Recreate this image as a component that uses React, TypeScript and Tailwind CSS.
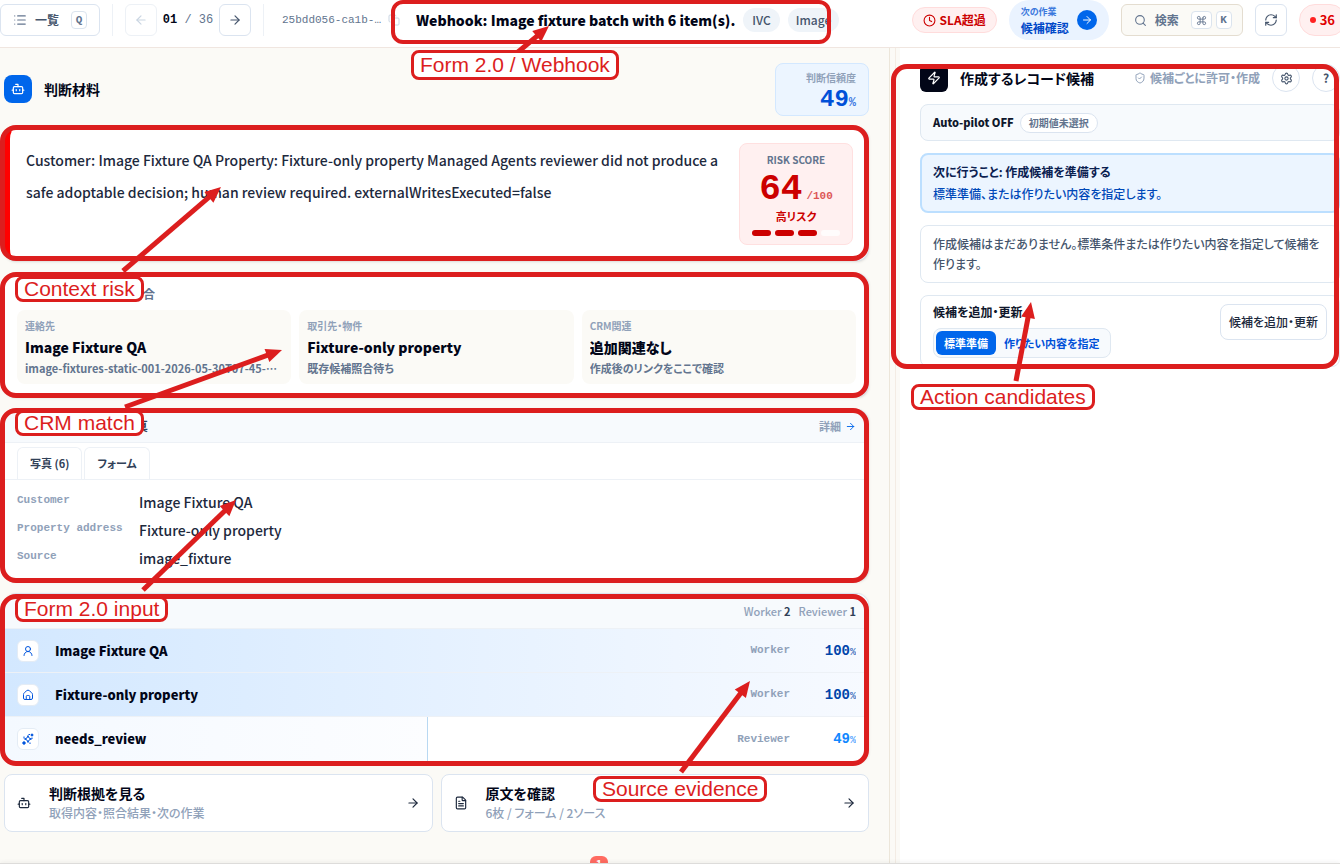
import type { ReactNode } from 'react'
import {
  ArrowLeft,
  ArrowRight,
  Bot,
  Clock,
  Command,
  Copy,
  FileText,
  List,
  RefreshCw,
  Search,
  Settings,
  ShieldCheck,
  UserRound,
  Zap,
} from 'lucide-react'
import { clsx } from 'clsx'

const MONO = "font-['Liberation_Mono',monospace]"

interface ArrowProps {
  from: [number, number]
  to: [number, number]
}

/* Callout arrow, coordinates relative to the annotated block */
function Arrow({ from, to }: ArrowProps) {
  const [x1, y1] = from
  const [x2, y2] = to
  const len = Math.hypot(x2 - x1, y2 - y1)
  const ux = (x2 - x1) / len
  const uy = (y2 - y1) / len
  const bx = x2 - ux * 16
  const by = y2 - uy * 16
  return (
    <svg className="pointer-events-none absolute left-0 top-0 z-10 size-px overflow-visible" aria-hidden="true">
      <line x1={x1} y1={y1} x2={bx + ux * 3} y2={by + uy * 3} stroke="#dc1e1e" strokeWidth={5} />
      <polygon
        points={`${x2},${y2} ${bx - uy * 7},${by + ux * 7} ${bx + uy * 7},${by - ux * 7}`}
        fill="#dc1e1e"
      />
    </svg>
  )
}

function Frame({ className }: { className: string }) {
  return (
    <div
      className={clsx('pointer-events-none absolute z-20 border-[#dc1e1e]', className)}
      aria-hidden="true"
    />
  )
}

function Callout({ className, children }: { className: string; children: ReactNode }) {
  return (
    <span
      className={clsx(
        "absolute z-10 flex items-center whitespace-nowrap rounded-lg border-3 border-[#dc1e1e] bg-white px-[6px] font-['Liberation_Sans',sans-serif] text-[21px] leading-5 text-[#dc1e1e]",
        className
      )}
    >
      {children}
    </span>
  )
}

function Kbd({ children }: { children: ReactNode }) {
  return (
    <kbd
      className={clsx(
        'flex h-[18px] min-w-4 items-center justify-center rounded border border-[#dbe4ee] bg-white text-[11px] text-slate-500',
        MONO
      )}
    >
      {children}
    </kbd>
  )
}

function HomeIcon() {
  return (
    <svg viewBox="0 0 24 24" className="size-3" fill="none" stroke="currentColor" strokeWidth={2} strokeLinejoin="round">
      <path d="M3 11c0-1.500.7-2.700 1.900-3.700l4.600-4a3.800 3.800 0 0 1 5 0l4.600 4c1.200 1 1.900 2.200 1.900 3.700v7a3 3 0 0 1-3 3H6a3 3 0 0 1-3-3z" />
      <path d="M8.500 21v-6a2 2 0 0 1 2-2h3a2 2 0 0 1 2 2v6" />
    </svg>
  )
}

function SparkIcon() {
  return (
    <svg viewBox="0 0 24 24" className="size-3" fill="none" stroke="currentColor" strokeWidth={2} strokeLinejoin="round">
      <path d="M12 5l2 5 5 2-5 2-2 5-2-5-5-2 5-2z" />
      <circle cx="20" cy="4" r="2" fill="currentColor" />
      <circle cx="4" cy="20" r="2.500" fill="currentColor" />
      <path d="M13 3h3M20 9v3M4 7v4M16 19v3" />
    </svg>
  )
}

const crmCells = [
  { label: '連絡先', title: 'Image Fixture QA', note: 'image-fixtures-static-001-2026-05-30T07-45-00-000Z' },
  { label: '取引先・物件', title: 'Fixture-only property', note: '既存候補照合待ち' },
  { label: 'CRM関連', title: '追加関連なし', note: '作成後のリンクをここで確認' },
]

const formRows = [
  { label: 'Customer', value: 'Image Fixture QA' },
  { label: 'Property address', value: 'Fixture-only property' },
  { label: 'Source', value: 'image_fixture' },
]

const evidence = [
  { icon: <UserRound size={12} />, name: 'Image Fixture QA', role: 'Worker', score: 100 },
  { icon: <HomeIcon />, name: 'Fixture-only property', role: 'Worker', score: 100 },
  { icon: <SparkIcon />, name: 'needs_review', role: 'Reviewer', score: 49 },
]

const links = [
  { icon: <Bot size={14} />, title: '判断根拠を見る', note: '取得内容・照合結果・次の作業' },
  { icon: <FileText size={14} />, title: '原文を確認', note: '6枚 / フォーム / 2ソース' },
]

function TopBar() {
  return (
    <header className="flex h-12 shrink-0 items-start border-b border-[#f0e6e0] bg-white">
      <div className="flex h-10 shrink-0 items-center">
        <button className="flex h-8 w-[100px] items-center rounded-md border border-[#dbe4f0] bg-white pl-3 text-xs font-bold text-slate-600">
          <List size={14} className="mr-2 text-slate-500" />
          一覧
          <span className="ml-3">
            <Kbd>Q</Kbd>
          </span>
        </button>
        <span className="ml-3 h-8 w-px bg-[#edf1f6]" />
        <button
          className="ml-3 flex size-8 items-center justify-center rounded-md border border-[#edf1f6] text-slate-300"
          aria-label="前へ"
          disabled
        >
          <ArrowLeft size={14} />
        </button>
        <span className={clsx('w-[62px] whitespace-pre text-center text-xs text-slate-500', MONO)}>
          <b className="text-slate-950">01</b> / 36
        </span>
        <button
          className="flex size-8 items-center justify-center rounded-md border border-[#dbe4f0] text-slate-600"
          aria-label="次へ"
        >
          <ArrowRight size={14} />
        </button>
        <span className="ml-3 h-8 w-px bg-[#edf1f6]" />
        <span className={clsx('ml-[18px] w-[100px] truncate text-[11px] leading-5 text-slate-500', MONO)}>
          25bdd056-ca1b-4f2e
        </span>
        <button className="ml-[6px] text-slate-300" aria-label="コピー">
          <Copy size={12} />
        </button>
      </div>

      <div className="relative ml-4 flex h-10 min-w-0 items-center">
        <h1 className="mr-2 truncate text-sm font-black text-slate-950">
          Webhook: Image fixture batch with 6 item(s).
        </h1>
        <span className="mr-2 flex h-6 items-center rounded-full bg-[#eff4f9] px-[9px] text-xs font-medium text-slate-600">
          IVC
        </span>
        <span className="flex h-6 items-center rounded-full bg-[#eff4f9] px-2 text-xs font-medium text-slate-600">
          Image
        </span>
        <Arrow from={[102, 52]} to={[133, 26]} />
        <Frame className="-left-[25px] right-2 top-0 h-11 rounded-xl border-4" />
        <Callout className="-left-[5px] top-[50px] h-[30px]">Form 2.0 / Webhook</Callout>
      </div>

      <div className="ml-auto flex h-10 shrink-0 items-center">
        <span className="flex h-[26px] items-center gap-1 rounded-full border border-[#ffdcdc] bg-[#fff0f0] px-[10px] text-xs font-bold text-[#cc0000]">
          <Clock size={13} />
          SLA超過
        </span>
        <button className="ml-3 flex h-10 items-center gap-2 rounded-full bg-[#eaf3ff] px-3 text-left">
          <span className="flex flex-col">
            <span className="text-[9px] font-bold leading-4 text-[#3b78dd]">次の作業</span>
            <span className="text-xs font-bold leading-4 text-[#0048c8]">候補確認</span>
          </span>
          <span className="flex size-5 items-center justify-center rounded-full bg-[#0066eb] text-white">
            <ArrowRight size={12} />
          </span>
        </button>
        <button className="ml-3 flex h-8 w-[122px] items-center rounded-md border border-[#e4ddd0] bg-[#fbfaf6] pl-3 text-xs font-bold text-slate-500">
          <Search size={13} className="mr-2" />
          検索
          <span className="ml-3 flex gap-1">
            <Kbd>
              <Command size={11} className="mx-1" />
            </Kbd>
            <Kbd>K</Kbd>
          </span>
        </button>
        <button
          className="ml-3 flex size-8 items-center justify-center rounded-md border border-[#dbe4f0] text-slate-600"
          aria-label="更新"
        >
          <RefreshCw size={14} />
        </button>
        <span className="-mr-[6px] ml-3 flex h-8 items-center gap-1 rounded-full border border-[#ffdcdc] bg-[#fff0f0] px-[10px] text-[13px] font-bold text-[#e00000]">
          <span className="size-[6px] rounded-full bg-[#ff2222]" />
          36
        </span>
      </div>
    </header>
  )
}

function RiskCard() {
  return (
    <div className="relative">
      <section className="flex gap-4 rounded-xl border border-l-6 border-[#dbe4f0] border-l-[#ff0000] bg-white py-[15px] pl-4 pr-[15px] shadow-sm">
        <p className="min-w-0 flex-1 pt-px text-sm/8 font-medium text-slate-800">
          Customer: Image Fixture QA Property: Fixture-only property Managed Agents reviewer did not produce a safe
          adoptable decision; human review required. externalWritesExecuted=false
        </p>
        <div className="flex h-[102px] w-[114px] shrink-0 flex-col items-center rounded-lg border border-[#ffe0e0] bg-[#fff0f0] px-3 pt-2 text-[#cc0000]">
          <span className="text-[10px] font-bold leading-4 text-slate-500">RISK SCORE</span>
          <span className={clsx('flex h-10 items-baseline gap-1 pt-[2px]', MONO)}>
            <b className="text-4xl/10">64</b>
            <span className="text-[11px] font-bold opacity-65">/100</span>
          </span>
          <span className="text-[11px] font-bold leading-4">高リスク</span>
          <span className="mt-[6px] flex w-full gap-1">
            {[1, 2, 3, 4].map((n) => (
              <span key={n} className={clsx('h-[6px] flex-1 rounded-full', n < 4 ? 'bg-[#cc0000]' : 'bg-white/80')} />
            ))}
          </span>
        </div>
      </section>
      <Arrow from={[119, 144]} to={[217, 60]} />
      <Frame className="-left-1 -top-[2px] bottom-0 right-0 rounded-2xl border-5" />
    </div>
  )
}

function CrmCard() {
  return (
    <div className="relative">
      <section className="rounded-xl border border-[#dbe4f0] bg-white px-3 pb-3 shadow-sm">
        <h2 className="flex h-9 items-center pl-[126px] pt-1 text-xs font-bold text-slate-500">合</h2>
        <div className="grid grid-cols-3 gap-2">
          {crmCells.map((cell) => (
            <div key={cell.label} className="min-w-0 rounded-lg bg-[#fbfaf6] px-2 py-2">
              <div className="text-[10px] font-bold leading-4 text-slate-400">{cell.label}</div>
              <div className="truncate text-sm/[26px] font-black text-slate-950">{cell.title}</div>
              <div className="truncate text-[11px] font-bold leading-4 text-slate-500">{cell.note}</div>
            </div>
          ))}
        </div>
      </section>
      <Arrow from={[121, 134]} to={[278, 77]} />
      <Frame className="-bottom-px -left-1 -top-px right-0 rounded-2xl border-5" />
      <Callout className="left-[11px] top-[3px] h-[26px]">Context risk</Callout>
    </div>
  )
}

function FormCard() {
  return (
    <div className="relative">
      <section className="overflow-hidden rounded-xl border border-[#dbe4f0] bg-white shadow-sm">
        <div className="flex h-[33px] items-center justify-between border-b border-[#edf1f6] bg-[#f7fafd] px-3 text-[11px] font-bold">
          <h2 className="pl-[119px] text-xs text-slate-700">真</h2>
          <a href="#detail" className="flex items-center gap-1 text-slate-400">
            詳細
            <ArrowRight size={11} className="text-[#0066eb]" />
          </a>
        </div>
        <div className="flex h-[37px] items-end gap-[2px] border-b border-[#edf1f6] px-3 text-[11px] font-bold text-slate-700">
          <button className="h-8 rounded-t-md border border-b-0 border-[#edf1f6] px-3">写真 (6)</button>
          <button className="h-8 rounded-t-md border border-b-0 border-[#edf1f6] px-3">フォーム</button>
        </div>
        <dl className="px-3 py-2">
          {formRows.map((row) => (
            <div key={row.label} className="flex h-7">
              <dt className={clsx('w-[122px] shrink-0 pt-1 text-[11px] font-bold leading-4 text-slate-400', MONO)}>
                {row.label}
              </dt>
              <dd className="text-sm/7 font-medium text-slate-800">{row.value}</dd>
            </div>
          ))}
        </dl>
      </section>
      <Arrow from={[139, 181]} to={[232, 91]} />
      <Frame className="-bottom-[2px] -left-1 -top-px right-0 rounded-2xl border-5" />
      <Callout className="left-[11px] top-[1px] h-[26px]">CRM match</Callout>
    </div>
  )
}

function EvidenceCard() {
  return (
    <div className="relative">
      <section className="overflow-hidden rounded-xl border border-[#dbe4f0] bg-white shadow-sm">
        <div className="flex h-[35px] items-center justify-end gap-2 border-b border-[#edf1f6] bg-[#f7fafd] px-3 text-[11px] font-medium text-slate-400">
          <span>
            Worker <b className="text-slate-700">2</b>
          </span>
          <span>
            Reviewer <b className="text-slate-700">1</b>
          </span>
        </div>
        {evidence.map((item) => {
          const full = item.score === 100
          return (
            <div key={item.name} className="relative flex h-11 items-center border-b border-[#edf1f6] px-3 last:border-b-0">
              <span
                className={clsx(
                  'absolute inset-y-0 left-0 bg-linear-to-r',
                  full ? 'from-[#d3e8ff] to-[#f7faff]' : 'border-r border-[#b8d8f2] from-[#f4f9ff] to-[#fcfdff]'
                )}
                style={{ width: `${item.score}%` }}
              />
              <span className="relative flex size-[22px] items-center justify-center rounded-md border border-[#e4ecf5] bg-white text-[#0055dd]">
                {item.icon}
              </span>
              <span className="relative ml-4 flex-1 text-[13px] font-black text-slate-950">{item.name}</span>
              <span className={clsx('relative text-[11px] font-bold text-slate-400', MONO)}>{item.role}</span>
              <span
                className={clsx(
                  'relative w-[66px] text-right text-sm font-bold',
                  MONO,
                  full ? 'text-[#0044aa]' : 'text-[#1188ff]'
                )}
              >
                {item.score}
                <span className="text-[10px] opacity-75">%</span>
              </span>
            </div>
          )
        })}
      </section>
      <Arrow from={[677, 179]} to={[746, 88]} />
      <Frame className="-bottom-1 -left-1 right-0 top-px rounded-2xl border-5" />
      <Callout className="left-[11px] top-[3px] h-[26px]">Form 2.0 input</Callout>
    </div>
  )
}

function ContextColumn() {
  return (
    <main className="relative flex min-w-0 flex-1 flex-col gap-3 border-r border-[#ece6da] bg-[#fbfaf6] pl-1 pr-5 pt-[15px]">
      <div className="flex h-[52px] items-center">
        <span className="flex size-7 items-center justify-center rounded-lg bg-[#0066eb] text-white">
          <Bot size={14} />
        </span>
        <h2 className="ml-3 flex-1 text-sm font-bold text-slate-950">判断材料</h2>
        <div className="flex h-[53px] w-[94px] flex-col items-end rounded-lg border border-[#d3e8ff] bg-[#ecf5ff] px-3 pt-1 font-bold">
          <span className="text-[10px] leading-5 text-slate-400">判断信頼度</span>
          <span className={clsx('text-2xl/6 text-[#0050d8]', MONO)}>
            49<span className="text-xs opacity-75">%</span>
          </span>
        </div>
      </div>
      <RiskCard />
      <CrmCard />
      <FormCard />
      <EvidenceCard />
      <div className="relative grid grid-cols-2 gap-2">
        {links.map((link) => (
          <button
            key={link.title}
            className="flex h-[58px] items-center rounded-lg border border-[#dbe4f0] bg-white px-3 text-left text-slate-800"
          >
            {link.icon}
            <span className="ml-[18px] flex flex-1 flex-col">
              <span className="text-sm/5 font-bold text-slate-950">{link.title}</span>
              <span className="text-xs/5 font-medium text-slate-400">{link.note}</span>
            </span>
            <ArrowRight size={14} />
          </button>
        ))}
        <Callout className="left-[589px] top-[2px] h-[26px]">Source evidence</Callout>
      </div>
      <span className="absolute -bottom-[10px] left-[590px] h-[18px] w-[18px] rounded-md bg-[#ff6b61] text-center text-[11px] font-bold leading-4 text-white">
        1
      </span>
    </main>
  )
}

function ActionColumn() {
  return (
    <aside className="w-[440px] shrink-0 bg-white pl-5 pt-4">
      <div className="relative flex flex-col gap-3">
        <div className="flex h-7 items-center">
          <span className="flex size-7 items-center justify-center rounded-md bg-[#020617] text-white">
            <Zap size={14} />
          </span>
          <h2 className="ml-3 flex-1 text-sm font-bold text-slate-950">作成するレコード候補</h2>
          <span className="flex items-center gap-1 text-xs font-bold text-slate-400">
            <ShieldCheck size={12} />
            候補ごとに許可・作成
          </span>
          <button
            className="ml-3 flex size-7 items-center justify-center rounded-full border border-[#dbe4f0] text-slate-600"
            aria-label="設定"
          >
            <Settings size={13} />
          </button>
          <button className="ml-3 flex size-7 items-center justify-center rounded-full border border-[#dbe4f0] text-xs font-bold text-slate-600">
            ?
          </button>
        </div>
        <div className="flex h-[37px] items-center gap-[6px] rounded-lg border border-[#dfe8f1] bg-[#f7fafd] px-3 text-[11px] font-black text-slate-900">
          Auto-pilot OFF
          <span className="rounded-full border border-[#dbe4f0] bg-white px-2 text-[10px] font-bold leading-[18px] text-slate-500">
            初期値未選択
          </span>
        </div>
        <div className="rounded-lg border-2 border-[#bcdfff] bg-[#ecf5ff] px-[11px] py-[6px] text-xs">
          <p className="font-bold leading-[22px] text-[#0a2050]">次に行うこと: 作成候補を準備する</p>
          <p className="font-medium leading-[22px] text-[#0048b8]">標準準備、または作りたい内容を指定します。</p>
        </div>
        <p className="rounded-lg border border-[#dfe8f1] px-3 py-2 text-xs/5 font-medium text-slate-600">
          作成候補はまだありません。標準条件または作りたい内容を指定して候補を作ります。
        </p>
        <div className="flex items-start justify-between rounded-lg border border-[#dfe8f1] px-3 py-2">
          <div>
            <h3 className="text-xs/4 font-bold text-slate-900">候補を追加・更新</h3>
            <div className="mt-2 flex h-[30px] items-center rounded-lg border border-[#dfe8f1] bg-[#f7fafd] px-[2px] text-[11px] font-bold">
              <button className="h-6 rounded-md bg-[#0066eb] px-2 text-white">標準準備</button>
              <button className="h-6 px-2 text-[#0050d8]">作りたい内容を指定</button>
            </div>
          </div>
          <button className="h-9 rounded-lg border border-[#dbe4f0] px-2 text-xs font-medium text-slate-800">
            候補を追加・更新
          </button>
        </div>
        <Arrow from={[96, 317]} to={[111, 238]} />
        <Frame className="-bottom-[2px] -left-[29px] right-px top-0 rounded-2xl border-5" />
        <Callout className="-left-[9px] top-[320px] h-[26px]">Action candidates</Callout>
      </div>
    </aside>
  )
}

export default function App() {
  return (
    <div
      lang="ja"
      className="relative flex h-screen flex-col overflow-hidden bg-white font-['Noto_Sans_CJK_JP',sans-serif] [font-feature-settings:'palt']"
    >
      <TopBar />
      <div className="flex min-h-0 flex-1">
        <ContextColumn />
        <div className="w-[10px] shrink-0 bg-[#fbfaf6] pl-[5px]">
          <div className="h-full w-px bg-[#f3ece4]" />
        </div>
        <ActionColumn />
      </div>
      <div className="absolute inset-x-0 bottom-0 h-px bg-[#dddcda] shadow-[0_0_4px_#00000030]" />
    </div>
  )
}
